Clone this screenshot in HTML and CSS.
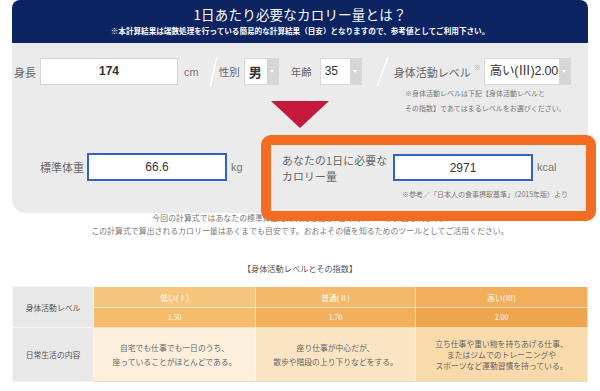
FILE: index.html
```html
<!DOCTYPE html>
<html lang="ja">
<head>
<meta charset="utf-8">
<title>1日あたり必要なカロリー量とは？</title>
<link rel="stylesheet" href="styles.css">
</head>
<body>
<div class="wrap">
  <header class="hdr">
    <h1>1日あたり必要なカロリー量とは？</h1>
    <p>※本計算結果は端数処理を行っている簡易的な計算結果（目安）となりますので、参考値としてご利用下さい。</p>
  </header>
  <section class="panel">
    <div class="row1">
      <span class="lbl l-height">身長</span>
      <div class="inp inp-height">174</div>
      <span class="unit u-cm">cm</span>
      <svg class="slash s1" width="9" height="32" viewBox="0 0 9 32"><line x1="1" y1="31" x2="8" y2="1" stroke="#fff" stroke-width="1.4"/></svg>
      <span class="lbl l-sex">性別</span>
      <div class="sel sel-sex"><span class="val v-sex">男</span><span class="arr"></span></div>
      <span class="lbl l-age">年齢</span>
      <div class="sel sel-age"><span class="val v-age">35</span><span class="arr"></span></div>
      <svg class="slash s2" width="13" height="32" viewBox="0 0 13 32"><line x1="1" y1="31" x2="12" y2="1" stroke="#fff" stroke-width="1.4"/></svg>
      <span class="lbl l-act">身体活動レベル<sup class="mark">※</sup></span>
      <div class="sel sel-act"><span class="val v-act">高い(Ⅲ)2.00</span><span class="arr"></span></div>
    </div>
    <div class="mid">
      <div class="tri"></div>
      <p class="note">※身体活動レベルは下記【身体活動レベルと<br>その指数】であてはまるレベルをお選びください。</p>
    </div>
    <div class="row2">
      <div class="std">
        <span class="lbl l-std">標準体重</span>
        <div class="inp inp-blue inp-std">66.6</div>
        <span class="unit u-kg">kg</span>
      </div>
      <div class="result">
        <div class="res-row">
          <p class="res-lbl">あなたの1日に必要な<br>カロリー量</p>
          <div class="inp inp-blue inp-res">2971</div>
          <span class="unit u-kcal">kcal</span>
        </div>
        <p class="res-note">※参考／「日本人の食事摂取基準」（2015年版）より</p>
      </div>
    </div>
  </section>
  <p class="desc">今回の計算式ではあなたの標準体重とそれに必要な1日のカロリーが算出されます。<br>この計算式で算出されるカロリー量はあくまでも目安です。おおよその値を知るためのツールとしてご活用ください。</p>
  <h2 class="tbl-title">【身体活動レベルとその指数】</h2>
  <table class="lvl">
    <colgroup><col class="c0"><col class="c1"><col class="c2"><col class="c3"></colgroup>
    <tr class="r1">
      <th rowspan="2" class="side">身体活動レベル</th>
      <td class="h1">低い(Ⅰ)</td>
      <td class="h2">普通(Ⅱ)</td>
      <td class="h3">高い(Ⅲ)</td>
    </tr>
    <tr class="r2">
      <td class="v1">1.50</td>
      <td class="v2">1.70</td>
      <td class="v3">2.00</td>
    </tr>
    <tr class="r3">
      <th class="side">日常生活の内容</th>
      <td class="b1 lh-wide">自宅でも仕事でも一日のうち、<br>座っていることがほとんどである。</td>
      <td class="b2 lh-wide">座り仕事が中心だが、<br>散歩や階段の上り下りなどをする。</td>
      <td class="b3 lh-tight">立ち仕事や重い物を持ちあげる仕事、<br>またはジムでのトレーニングや<br>スポーツなど運動習慣を持っている。</td>
    </tr>
  </table>
</div>
</body>
</html>
```
FILE: styles.css
```css
html, body { margin: 0; padding: 0; background: #fff; }
body { font-family: "Noto Sans CJK JP", "Noto Sans", sans-serif; color: #555; }
.wrap { width: 576px; margin-left: 12px; }

.hdr { height: 43px; background: #0c2461; border-radius: 8px 8px 0 0; color: #fff; text-align: center; }
.hdr h1 { margin: 0; padding-top: 5px; font-size: 13.5px; line-height: 18px; font-weight: normal; letter-spacing: 0.2px; }
.hdr p { margin: 3px 0 0; font-size: 7.6px; line-height: 10px; font-weight: bold; }

.panel { background: #ebebeb; height: 170px; box-sizing: border-box; padding-top: 15px; border-radius: 0 0 14px 14px; }

.row1 { display: flex; align-items: center; height: 27px; padding-left: 2px; }
.lbl { font-size: 11px; color: #666; white-space: nowrap; line-height: 14px; }
.l-sex, .l-age { font-size: 10.5px; }
.inp { box-sizing: border-box; height: 27px; background: #fff; border: 1px solid #d3d3d3; text-align: center; font-family: "Liberation Sans", Arial, sans-serif; font-size: 12px; color: #333; line-height: 25px; }
.inp-height { width: 138px; margin-left: 4px; font-weight: bold; }
.unit { font-family: "Liberation Sans", Arial, sans-serif; font-size: 11px; color: #777; }
.u-cm { margin-left: 6px; }
.slash { display: block; }
.s1 { margin-left: 10px; }
.l-sex { margin-left: 1px; }
.sel { display: flex; box-sizing: border-box; height: 27px; background: #fff; border: 1px solid #d8d8d8; }
.sel .val { flex: 1; min-width: 0; overflow: hidden; white-space: nowrap; line-height: 25px; padding-left: 4px; color: #333; font-family: "Liberation Sans", "Noto Sans CJK JP", sans-serif; }
.sel .arr { flex: none; width: 11px; background: #d6d6d6; display: flex; align-items: center; justify-content: center; }
.sel .arr::after { content: ""; width: 0; height: 0; border-left: 2.5px solid transparent; border-right: 2.5px solid transparent; border-top: 3px solid #fff; }
.sel-sex { width: 35px; margin-left: 4px; }
.v-sex { font-family: "Noto Sans CJK JP", sans-serif !important; font-size: 13px; font-weight: bold; }
.l-age { margin-left: 12px; }
.sel-age { width: 42px; margin-left: 8px; }
.v-age { font-size: 12px; }
.s2 { margin-left: 14px; }
.l-act { margin-left: 5px; position: relative; }
.mark { font-size: 7px; color: #aaa; vertical-align: top; position: relative; top: -5px; margin-left: 3px; }
.sel-act { width: 87px; margin-left: 3px; }
.v-act { font-size: 12.5px; padding-left: 5px !important; letter-spacing: -0.2px; }

.mid { display: flex; align-items: flex-start; height: 50px; }
.tri { width: 0; height: 0; margin-left: 259px; margin-top: 16px; border-left: 29px solid transparent; border-right: 29px solid transparent; border-top: 27px solid #c5183c; }
.note { margin: 1px 0 0 76px; font-size: 7px; line-height: 14.5px; color: #777; white-space: nowrap; }

.row2 { display: flex; align-items: flex-start; }
.std { display: flex; align-items: center; height: 28px; margin-top: 18px; margin-left: 28px; }
.inp-blue { border: 2px solid #2e62c6; line-height: 24px; font-weight: normal; }
.inp-std { width: 140px; height: 28px; margin-left: 3px; }
.u-kg { margin-left: 4px; }
.result { position: relative; z-index: 1; box-sizing: border-box; width: 335px; height: 86px; margin-left: auto; margin-right: -8px; border: 10px solid #f36c21; border-radius: 10px; background: #ebebeb; padding: 7px 0 0 11px; }
.res-row { display: flex; align-items: flex-start; height: 32px; }
.res-lbl { margin: 0; width: 111px; font-size: 10.8px; line-height: 16px; color: #666; white-space: nowrap; letter-spacing: 0.2px; }
.inp-res { width: 140px; margin-top: 2px; }
.u-kcal { margin-left: 4px; margin-top: 2px; line-height: 27px; }
.res-note { margin: 5px 0 0 120px; font-size: 7px; line-height: 10px; color: #777; white-space: nowrap; }

.desc { margin: -2px 0 0; text-align: center; font-size: 7.9px; line-height: 13px; color: #777; }
.tbl-title { margin: 25px 0 0; text-align: center; font-size: 8.2px; line-height: 12px; font-weight: normal; color: #555; }

.lvl { margin-top: 12px; width: 575px; border-collapse: collapse; table-layout: fixed; font-size: 7.8px; text-align: center; }
.c0 { width: 81px; } .c1 { width: 162px; } .c2 { width: 160px; } .c3 { width: 172px; }
.lvl th, .lvl td { padding: 0; border: 1px solid rgba(255,255,255,0.55); }
.lvl .side { background: #e8e8e8; color: #555; font-weight: normal; border-color: #f4f4f4; }
.r1 td { height: 20px; color: #fff; }
.r2 td { height: 19px; color: #fff; font-family: "Liberation Serif", serif; }
.r3 td, .r3 th { height: 53px; }
.h1 { background: #f7c67e; } .h2 { background: #f4b86a; } .h3 { background: #f2ae5a; }
.v1 { background: #f5bc6c; } .v2 { background: #f2af5c; } .v3 { background: #efa54d; }
.b1 { background: #fcf0dd; } .b2 { background: #fbe4c3; } .b3 { background: #f9daab; }
.r3 td { color: #666; }
.lh-wide { line-height: 14px; }
.lh-tight { line-height: 11px; }
.r3 td, .r3 th { border-bottom: 1px solid #e6ddd0; }
```
